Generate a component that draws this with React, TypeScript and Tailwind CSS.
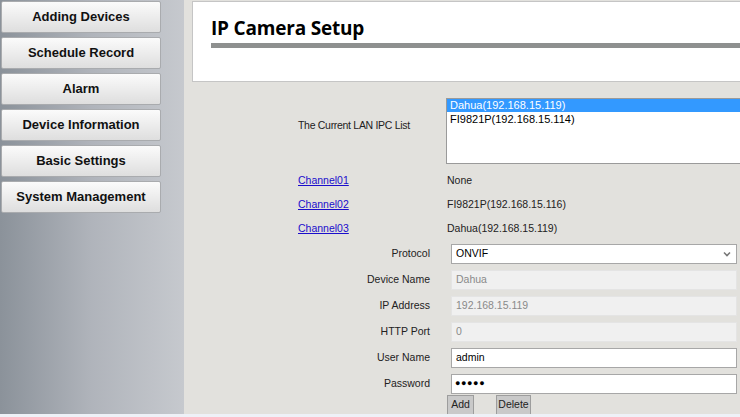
const menu = [
  'Adding Devices',
  'Schedule Record',
  'Alarm',
  'Device Information',
  'Basic Settings',
  'System Management',
];

const channels = [
  { name: 'Channel01', value: 'None' },
  { name: 'Channel02', value: 'FI9821P(192.168.15.116)' },
  { name: 'Channel03', value: 'Dahua(192.168.15.119)' },
];

const fields = [
  { label: 'Device Name', value: 'Dahua', disabled: true },
  { label: 'IP Address', value: '192.168.15.119', disabled: true },
  { label: 'HTTP Port', value: '0', disabled: true },
  { label: 'User Name', value: 'admin', disabled: false },
];

const ui = "font-['Liberation_Sans',Arial,sans-serif]";

export default function App() {
  return (
    <div className={`flex h-[417px] w-[740px] flex-col overflow-hidden ${ui}`}>
      <div className="flex h-[414px]">
        {/* sidebar */}
        <aside className="flex w-[184px] shrink-0 flex-col gap-[4px] bg-gradient-to-r from-[#8b929a] via-[#b0b4bb] to-[#c6c9ce] pl-[1px] pt-[1px]">
          {menu.map((item) => (
            <button
              key={item}
              className="flex h-[32px] w-[160px] items-center justify-center rounded-[2px] border border-[#a9abae] bg-gradient-to-b from-[#fbfbfb] to-[#dedede] text-[13px] font-bold text-[#111]"
            >
              {item}
            </button>
          ))}
        </aside>

        {/* main */}
        <main className="flex-1 overflow-hidden bg-[#e2e1dd]">
          <div className="ml-[8px] mt-[1px] h-[81px] w-[600px] border border-[#c5c5c5] bg-white pl-[18px] pt-[13px]">
            <h1 className="font-['Open_Sans',sans-serif] text-[19px] font-bold leading-[26px] tracking-[-0.2px] text-black">
              IP Camera Setup
            </h1>
            <div className="mt-[2px] h-[5px] bg-[#8e908f]" />
          </div>

          <div className="pl-[114px] text-[10.5px] text-[#222]">
            {/* IPC list */}
            <div className="mt-[16px] flex items-start">
              <span className="mt-[20px] w-[148px] shrink-0 tracking-[-0.3px]">The Current LAN IPC List</span>
              <div className="h-[66px] w-[300px] shrink-0 border border-[#9a9a9a] bg-white">
                <div className="h-[13px] bg-[#3399ff] pl-[3px] text-[11px] leading-[13px] text-white">
                  Dahua(192.168.15.119)
                </div>
                <div className="pl-[3px] pt-[1px] text-[11px] leading-[13px] text-black">
                  FI9821P(192.168.15.114)
                </div>
              </div>
            </div>

            {/* channels */}
            <div className="mt-[5px]">
              {channels.map((c) => (
                <div key={c.name} className="flex h-[24px] items-center">
                  <a className="w-[149px] shrink-0 cursor-pointer text-[#1a0dcc] underline">
                    {c.name}
                  </a>
                  <span>{c.value}</span>
                </div>
              ))}
            </div>

            {/* form */}
            <div className="mt-[3px] flex flex-col gap-[6px]">
              <div className="flex h-[20px] items-center">
                <span className="w-[132px] shrink-0 text-right">Protocol</span>
                <div className="ml-[21px] flex h-[20px] w-[286px] shrink-0 items-center justify-between border border-[#a7a7a7] bg-white pl-[4px] pr-[5px] text-black">
                  <span>ONVIF</span>
                  <svg width="8" height="6" viewBox="0 0 8 6">
                    <path d="M1 1.5l3 3 3-3" fill="none" stroke="#777" strokeWidth="1.6" />
                  </svg>
                </div>
              </div>

              {fields.map((f) => (
                <div key={f.label} className="flex h-[20px] items-center">
                  <span className="w-[132px] shrink-0 text-right">{f.label}</span>
                  <div
                    className={
                      f.disabled
                        ? 'ml-[21px] flex h-[20px] w-[286px] shrink-0 items-center border border-[#e4e4e4] bg-[#f0f0f0] pl-[4px] text-[#8a8a8a]'
                        : 'ml-[21px] flex h-[20px] w-[286px] shrink-0 items-center border border-[#a7a7a7] bg-white pl-[4px] text-black'
                    }
                  >
                    {f.value}
                  </div>
                </div>
              ))}

              <div className="flex h-[20px] items-center">
                <span className="w-[132px] shrink-0 text-right">Password</span>
                <div className="ml-[21px] flex h-[20px] w-[286px] shrink-0 items-center border border-[#a7a7a7] bg-white pl-[3px] text-[9px] tracking-[0.6px] text-black">
                  ●●●●●
                </div>
              </div>
            </div>

            <div className="ml-[149px] mt-[1px] flex gap-[22px]">
              <button className="h-[20px] w-[27px] border border-[#9d9d9d] bg-[#c9c9c9] text-[10.5px] text-[#222]">
                Add
              </button>
              <button className="h-[20px] w-[35px] border border-[#9d9d9d] bg-[#c9c9c9] text-[10.5px] text-[#222]">
                Delete
              </button>
            </div>
          </div>
        </main>
      </div>
      <div className="h-[3px] bg-[#eef1f7]" />
    </div>
  );
}
